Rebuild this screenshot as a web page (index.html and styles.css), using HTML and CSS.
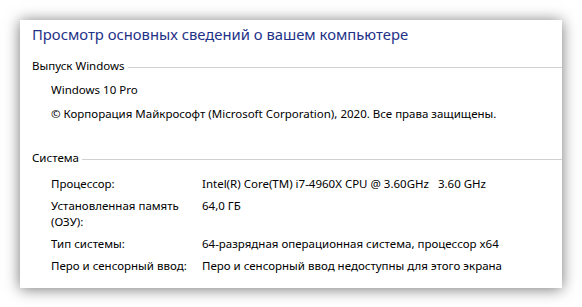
FILE: index.html
```html
<!DOCTYPE html>
<html lang="ru">
<head>
  <meta charset="UTF-8">
  <meta name="viewport" content="width=device-width, initial-scale=1.0">
  <title>Система</title>
  <link rel="stylesheet" href="styles.css">
</head>
<body>
  <div class="panel">
    <h1 class="title">Просмотр основных сведений о вашем компьютере</h1>

    <!-- Windows edition -->
    <div class="group-head">Выпуск Windows</div>
    <p class="line">Windows 10 Pro</p>
    <p class="line">© Корпорация Майкрософт (Microsoft Corporation), 2020. Все права защищены.</p>

    <!-- System -->
    <div class="group-head group-gap">Система</div>
    <div class="props">
      <div class="prop-name">Процессор:</div>
      <div class="prop-value">Intel(R) Core(TM) i7-4960X CPU @ 3.60GHz&nbsp;&nbsp; 3.60 GHz</div>
      <div class="prop-name">Установленная память (ОЗУ):</div>
      <div class="prop-value">64,0 ГБ</div>
      <div class="prop-name">Тип системы:</div>
      <div class="prop-value">64-разрядная операционная система, процессор x64</div>
      <div class="prop-name">Перо и сенсорный ввод:</div>
      <div class="prop-value">Перо и сенсорный ввод недоступны для этого экрана</div>
    </div>
  </div>
</body>
</html>
```

FILE: styles.css
```css
body {
  margin: 0;
  padding: 20px;
  background: #fff;
  font-family: "Noto Sans", "Open Sans", sans-serif;
  font-size: 11.5px;
  color: #000;
}
.panel {
  background: #fff;
  padding: 4px 0 14px 12px;
  box-shadow: 0 1px 14px rgba(0, 0, 0, 0.55);
}
.title {
  margin: 0 0 14px;
  font-size: 14.8px;
  font-weight: normal;
  line-height: 20px;
  color: #1e3287;
}
.group-head {
  display: flex;
  align-items: center;
  line-height: 16px;
}
.group-head::after {
  content: "";
  flex: 1;
  margin: 2px 0 0 3px;
  border-top: 1px solid #d0d0d0;
}
.group-gap {
  margin-top: 28px;
}
.line {
  margin: 8px 0 0 19px;
  line-height: 16px;
}
.props {
  display: grid;
  grid-template-columns: 151px 1fr;
  row-gap: 6px;
  margin: 10px 0 0 19px;
  line-height: 16px;
}
.prop-name {
  padding-right: 10px;
}
```
